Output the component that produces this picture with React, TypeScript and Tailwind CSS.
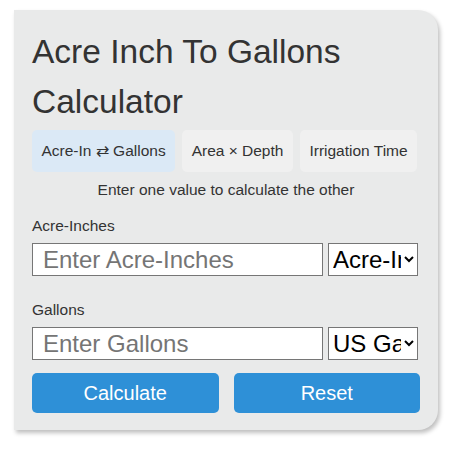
import React, { useState } from 'react';

const tabs = ['Acre-In ⇄ Gallons', 'Area × Depth', 'Irrigation Time'];

const App = () => {
  const [active, setActive] = useState(0);
  const [acreIn, setAcreIn] = useState('');
  const [gallons, setGallons] = useState('');

  return (
    <div className="min-h-[452px] w-[451px] bg-white pt-[10px] pl-[14px]" style={{ fontFamily: '"Liberation Sans", Arial, sans-serif' }}>
      <div className="w-[424px] h-[420px] bg-[#e9eaea] rounded-r-[20px] shadow-[2px_3px_4px_rgba(0,0,0,0.25)] pt-[17px] pl-[18px] pr-[18px] text-[#333]">
        <h1 className="text-[33.5px] leading-[50px] font-normal">Acre Inch To Gallons Calculator</h1>

        <div className="flex gap-[7px] mt-[3px]">
          {tabs.map((t, i) => (
            <button
              key={t}
              onClick={() => setActive(i)}
              className={`shrink-0 whitespace-nowrap h-[42px] px-[9.5px] rounded-[5px] text-[15.5px] text-[#333] ${i === active ? 'bg-[#dbe9f6]' : 'bg-[#f0f0f0]'}`}
            >
              {t}
            </button>
          ))}
        </div>

        <p className="text-center text-[15.5px] leading-[18px] mt-[9px]">Enter one value to calculate the other</p>

        <label className="block text-[15.5px] leading-[18px] mt-[18px]">Acre-Inches</label>
        <div className="flex gap-[5px] mt-[8px]">
          <input
            value={acreIn}
            onChange={(e) => setAcreIn(e.target.value)}
            placeholder="Enter Acre-Inches"
            className="w-[291px] h-[33px] border border-[#767676] bg-white px-[10px] text-[24px] placeholder:text-[#757575] outline-none"
          />
          <select className="w-[90px] h-[33px] border border-[#767676] bg-white text-[24px] text-black">
            <option>Acre-Inches</option>
          </select>
        </div>

        <label className="block text-[15.5px] leading-[18px] mt-[25px]">Gallons</label>
        <div className="flex gap-[5px] mt-[8px]">
          <input
            value={gallons}
            onChange={(e) => setGallons(e.target.value)}
            placeholder="Enter Gallons"
            className="w-[291px] h-[33px] border border-[#767676] bg-white px-[10px] text-[24px] placeholder:text-[#757575] outline-none"
          />
          <select className="w-[90px] h-[33px] border border-[#767676] bg-white text-[24px] text-black">
            <option>US Gallons</option>
          </select>
        </div>

        <div className="flex gap-[15px] mt-[13px]">
          <button className="flex-1 h-[40px] rounded-[5px] bg-[#2e90d7] text-white text-[20px]">Calculate</button>
          <button
            onClick={() => { setAcreIn(''); setGallons(''); }}
            className="flex-1 h-[40px] rounded-[5px] bg-[#2e90d7] text-white text-[20px]"
          >
            Reset
          </button>
        </div>
      </div>
    </div>
  );
};

export default App;
